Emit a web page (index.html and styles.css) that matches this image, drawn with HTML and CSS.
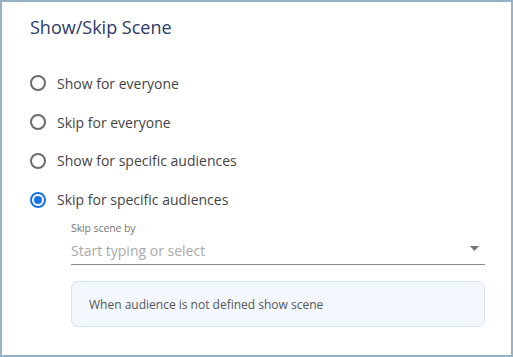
FILE: index.html
```html
<!DOCTYPE html>
<html>
<head>
<meta charset="utf-8">
<link rel="stylesheet" href="styles.css">
</head>
<body>
<div class="panel">
  <h1 class="title">Show/Skip Scene</h1>
  <div class="options">
    <label class="opt"><span class="radio"></span><span class="opt-text">Show for everyone</span></label>
    <label class="opt"><span class="radio"></span><span class="opt-text">Skip for everyone</span></label>
    <label class="opt"><span class="radio"></span><span class="opt-text">Show for specific audiences</span></label>
    <label class="opt"><span class="radio checked"></span><span class="opt-text">Skip for specific audiences</span></label>
  </div>
  <div class="sub">
    <div class="field-label">Skip scene by</div>
    <div class="field">
      <span class="placeholder">Start typing or select</span>
      <svg class="caret" width="9" height="5" viewBox="0 0 9 5"><path d="M0 0h9L4.5 5z" fill="#757575"/></svg>
    </div>
    <div class="note">When audience is not defined show scene</div>
  </div>
</div>
</body>
</html>
```
FILE: styles.css
```css
html, body { margin: 0; padding: 0; background: #fff; }
body { font-family: "Open Sans", "Noto Sans", sans-serif; }
.panel {
  box-sizing: border-box;
  width: 513px;
  height: 357px;
  border: 2px solid #97b3c3;
  padding: 13px 26px 0 28px;
}
.title {
  margin: 0;
  font-size: 18px;
  line-height: 24px;
  font-weight: 400;
  color: #2b3a67;
}
.options { margin-top: 25px; display: flex; flex-direction: column; }
.opt { display: flex; align-items: center; height: 38.8px; }
.radio {
  box-sizing: border-box;
  width: 16px; height: 16px;
  border: 2px solid #6b6b6b;
  border-radius: 50%;
  margin-right: 11px;
  position: relative;
}
.radio.checked { border-color: #1a73e8; }
.radio.checked::after {
  content: "";
  position: absolute;
  left: 2px; top: 2px;
  width: 8px; height: 8px;
  border-radius: 50%;
  background: #1a73e8;
}
.opt-text { font-size: 14px; color: #444; }
.sub { margin-left: 41px; }
.field-label { font-size: 10.5px; color: #777; line-height: 14px; margin-top: 2px; letter-spacing: -0.1px; }
.field {
  display: flex; align-items: center; justify-content: space-between;
  height: 30px;
  padding-top: 2px;
  box-sizing: border-box;
  border-bottom: 1px solid #8a8a8a;
  padding-right: 6px;
}
.placeholder { font-size: 14px; color: #a9a9a9; }
.caret { margin-top: -4px; }
.note {
  margin-top: 16px;
  height: 46px;
  box-sizing: border-box;
  border: 1px solid #d4e2fa;
  border-radius: 7px;
  background: #f3f7fe;
  padding-left: 17px;
  display: flex; align-items: center;
  font-size: 12px; color: #555;
}
```
